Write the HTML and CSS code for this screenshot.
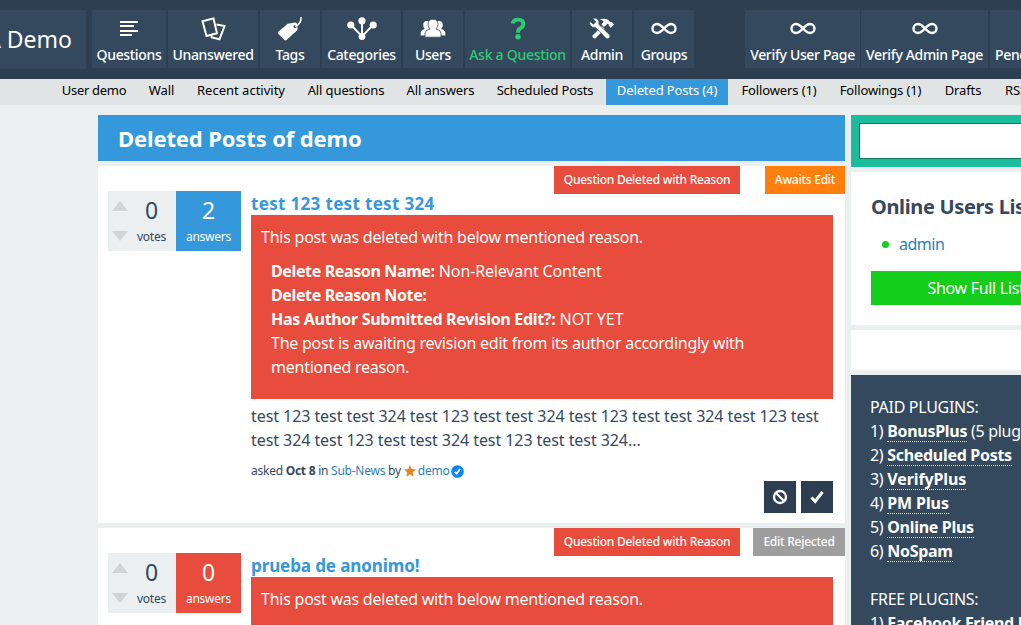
FILE: index.html
```html
<!DOCTYPE html>
<html lang="en">
<head>
<meta charset="utf-8">
<title>Deleted Posts of demo</title>
<link rel="stylesheet" href="styles.css">
</head>
<body>
<header class="topbar">
  <a class="logo"><span class="logo-text">Q2A Demo</span></a>
  <nav class="nav-main">
    <a class="tile t-questions"><svg class="icon" viewBox="0 0 30 30"><path d="M6 9h18M6 13h14M6 18h18M6 22h12" stroke="#fff" stroke-width="2"/></svg><span>Questions</span></a>
    <a class="tile t-unanswered"><svg class="icon" viewBox="0 0 30 30"><g fill="none" stroke="#fff" stroke-width="2"><path d="M4.500 8.200 15.500 5.400 19 20.300 8.500 23Z"/><path d="M18.500 11.500 26.500 13 21.500 26.300 13.800 24.500 13.200 22"/></g></svg><span>Unanswered</span></a>
    <a class="tile t-tags"><svg class="icon" viewBox="0 0 30 30"><path fill="#fff" fill-rule="evenodd" d="M3 19 12.700 10.700 20 9.500Q22 9.500 22.400 11.500L22.500 17 11.500 27Q10 28 9 26.500L3 20.500Q2.500 19.800 3 19ZM20 12a1.600 1.600 0 1 0 .1 0Z"/><path d="M20 13.500C24 12 26.300 9 26 4" fill="none" stroke="#fff" stroke-width="1.500"/></svg><span>Tags</span></a>
    <a class="tile t-categories"><svg class="icon" viewBox="0 0 30 30"><path d="M4 12 15 23.500 26 12M15 8v16" fill="none" stroke="#fff" stroke-width="1.900"/><g fill="#fff"><circle cx="3.800" cy="12" r="3.600"/><circle cx="15" cy="7.800" r="3.600"/><circle cx="26.200" cy="12" r="3.600"/><circle cx="15" cy="23.500" r="3.400"/></g></svg><span>Categories</span></a>
    <a class="tile t-users"><svg class="icon" viewBox="0 0 30 30"><g fill="#fff"><path d="M2.700 22.500v-3q0-2 4-3.500-1.500-1.500-1.500-4Q5.200 8 9 8q4 0 4 4.500 0 4-2 5l3 5Z"/><path d="M27.300 22.500v-3q0-2-4-3.500 1.500-1.500 1.500-4 0-4-3.800-4-4 0-4 4.500 0 4 2 5l-3 5Z"/><path stroke="#34495e" stroke-width=".8" d="M7 24.200v-4q0-3 5-4.200-2-2-2-4.500Q10 6.300 15 6.300t5 5.200q0 2.500-2 4.500 5 1.200 5 4.200v4Z"/></g></svg><span>Users</span></a>
    <a class="tile t-ask"><svg class="icon" viewBox="0 0 30 30"><path d="M9.800 10.500Q10.200 6.600 15 6.600q5.300 0 5.300 4.300 0 2.800-3 4.300-2.300 1.300-2.300 4.600" fill="none" stroke="#2ecc71" stroke-width="3.900"/><circle cx="15" cy="23.800" r="2.700" fill="#2ecc71"/></svg><span>Ask a Question</span></a>
    <a class="tile t-admin"><svg class="icon" viewBox="0 0 30 30"><path fill="#fff" d="m5.500 22.500 9.500-9.200 2.700 2.800-9.500 9.400q-3.400-.3-2.700-3Z"/><path fill="#fff" d="m12.500 6.300q5.500-1.500 8.500.5l2.500 2.500 1.300-.2 2.200 2.400-3.200 3.200-2.200-2.200.1-1.300-1.200-.5-3.500 3.300-2.700-2.700 2.500-2.500q-1-1.700-4.300-2.500Z"/><path stroke="#34495e" stroke-width=".7" fill="#fff" d="M5.800 5.300q3-1 5.300 1.500 1.500 2 .7 4.500l10.700 10.500q1.300 2.300-.8 3.700-1.500.8-3-.5L8.300 14.300Q5.500 15 3.600 12.800 2 10.800 2.800 8.200l3.500 3 2.500-2.300Z"/></svg><span>Admin</span></a>
    <a class="tile t-groups"><svg class="icon" viewBox="0 0 30 30"><path class="infinity" d="M15 15.500C12 12.200 10.500 11 8 11a4.500 4.500 0 0 0 0 9C10.500 20 12 18.800 15 15.500S19.500 11 22 11a4.500 4.500 0 0 1 0 9C19.500 20 18 18.800 15 15.500Z"/></svg><span>Groups</span></a>
    <a class="tile t-vuser"><svg class="icon" viewBox="0 0 30 30"><path class="infinity" d="M15 15.500C12 12.200 10.500 11 8 11a4.500 4.500 0 0 0 0 9C10.500 20 12 18.800 15 15.500S19.500 11 22 11a4.500 4.500 0 0 1 0 9C19.500 20 18 18.800 15 15.500Z"/></svg><span>Verify User Page</span></a>
    <a class="tile t-vadmin"><svg class="icon" viewBox="0 0 30 30"><path class="infinity" d="M15 15.500C12 12.200 10.500 11 8 11a4.500 4.500 0 0 0 0 9C10.500 20 12 18.800 15 15.500S19.500 11 22 11a4.500 4.500 0 0 1 0 9C19.500 20 18 18.800 15 15.500Z"/></svg><span>Verify Admin Page</span></a>
    <a class="tile t-pending"><i class="icon"></i><span>Pending</span></a>
  </nav>
</header>
<nav class="nav-sub">
  <a class="s1">User demo</a><a class="s2">Wall</a><a class="s3">Recent activity</a><a class="s4">All questions</a><a class="s5">All answers</a><a class="s6">Scheduled Posts</a><a class="s7 active">Deleted Posts (4)</a><a class="s8">Followers (1)</a><a class="s9">Followings (1)</a><a class="s10">Drafts</a><a class="s11">RSS</a>
</nav>
<div class="page">
  <main class="main">
    <h1><span>Deleted Posts of demo</span></h1>
    <article class="post post-full">
      <div class="labels"><span class="label red">Question Deleted with Reason</span><span class="label orange">Awaits Edit</span></div>
      <div class="post-row">
        <div class="stats">
          <div class="votes"><div class="arrows"><i class="up"></i><i class="down"></i></div><div class="count"><b>0</b><small>votes</small></div></div>
          <div class="answers"><b>2</b><small>answers</small></div>
        </div>
        <div class="content">
          <h2><span class="title-a">test 123 test test 324</span></h2>
          <div class="notice">
            <p><span class="n1">This post was deleted with below mentioned reason.</span></p>
            <div class="details">
              <div><b class="n2">Delete Reason Name:</b> <span class="n3">Non-Relevant Content</span></div>
              <div><b class="n2">Delete Reason Note:</b></div>
              <div><b class="n4">Has Author Submitted Revision Edit?:</b> <span class="n5">NOT YET</span></div>
              <div class="n6">The post is awaiting revision edit from its author accordingly with<br>mentioned reason.</div>
            </div>
          </div>
          <div class="excerpt">test 123 test test 324 test 123 test test 324 test 123 test test 324 test 123 test<br>test 324 test 123 test test 324 test 123 test test 324...</div>
          <div class="meta"><span>asked <b>Oct 8</b> in <a>Sub-News</a> by</span><svg class="star" viewBox="0 0 12 12"><path fill="#e67e22" d="m6 0 1.600 4.100 4.400.3-3.400 2.800 1.100 4.500L6 9.200l-3.700 2.500 1.100-4.500L0 4.400l4.400-.3Z"/></svg><a>demo</a><svg class="verified" viewBox="0 0 13 13"><circle cx="6.500" cy="6.500" r="6.300" fill="#0a84ff"/><path d="m3.800 6.800 1.800 1.900 3.500-4.900" fill="none" stroke="#fff" stroke-width="1.800"/></svg></div>
          <div class="actions">
            <button><svg viewBox="0 0 32 32"><g fill="none" stroke="#fff" stroke-width="2.300"><circle cx="16" cy="16" r="6"/><path d="m12 12 8 8"/></g></svg></button>
            <button><svg viewBox="0 0 32 32"><path d="m10.500 16.500 3.700 4L21.500 11" fill="none" stroke="#fff" stroke-width="3"/></svg></button>
          </div>
        </div>
      </div>
    </article>
    <article class="post">
      <div class="labels"><span class="label red">Question Deleted with Reason</span><span class="label gray">Edit Rejected</span></div>
      <div class="post-row">
        <div class="stats">
          <div class="votes"><div class="arrows"><i class="up"></i><i class="down"></i></div><div class="count"><b>0</b><small>votes</small></div></div>
          <div class="answers none"><b>0</b><small>answers</small></div>
        </div>
        <div class="content">
          <h2><span class="title-b">prueba de anonimo!</span></h2>
          <div class="notice"><p><span class="n1">This post was deleted with below mentioned reason.</span></p></div>
        </div>
      </div>
    </article>
  </main>
  <aside class="side">
    <div class="search"><div class="search-input"></div></div>
    <section class="online">
      <h3>Online Users List</h3>
      <ul><li><a>admin</a></li></ul>
      <a class="full-list">Show Full List</a>
    </section>
    <section class="blank"></section>
    <section class="plugins">
      <div>PAID PLUGINS:</div>
      <div>1) <a>BonusPlus</a> (5 plugins)</div>
      <div>2) <a>Scheduled Posts</a></div>
      <div>3) <a class="wide">VerifyPlus</a></div>
      <div>4) <a class="wide">PM Plus</a></div>
      <div>5) <a>Online Plus</a></div>
      <div>6) <a>NoSpam</a></div>
      <div class="gap">FREE PLUGINS:</div>
      <div>1) <a>Facebook Friend List</a></div>
    </section>
  </aside>
</div>
</body>
</html>
```
FILE: styles.css
```css
* { box-sizing: border-box; }
html, body { height: 625px; overflow: hidden; }
body { margin: 0; background: #ebeff0; color: #34495e; font: 16px/24px "Noto Sans", "Open Sans", sans-serif; white-space: nowrap; }
h1, h2, h3, p, ul { margin: 0; padding: 0; }
svg { display: block; }

.topbar { height: 79px; padding-top: 10px; background: #2c3e50; display: flex; align-items: flex-start; overflow: hidden; }
.logo { flex: none; width: 86px; height: 59px; margin-right: 6px; padding-right: 14px; background: #34495e; color: #fff; font-size: 23px; line-height: 58px; display: flex; justify-content: flex-end; overflow: hidden; }
.nav-main { display: flex; gap: 2px; }
.tile { flex: none; height: 58px; background: #34495e; color: #fff; font-size: 14px; line-height: 20px; font-weight: 500; letter-spacing: -.34px; display: flex; flex-direction: column; align-items: center; }
.icon { width: 30px; height: 30px; margin: 3px 0 2px; }
.infinity { fill: none; stroke: #fff; stroke-width: 2.4; }
.t-questions { width: 74px; }
.t-unanswered { width: 90px; }
.t-tags { width: 60px; }
.t-categories { width: 79px; }
.t-users { width: 60px; }
.t-ask { width: 105px; color: #2ecc71; letter-spacing: -.25px; }
.t-admin, .t-groups { width: 60px; }
.t-vuser { width: 115px; margin-left: 49px; }
.t-vadmin { width: 127px; margin-left: -1px; }
.t-pending { width: 80px; padding-left: 5px; align-items: flex-start; }

.nav-sub { height: 26px; padding-left: 52px; background: #e0e4e4; color: #000; font-size: 13px; line-height: 23px; letter-spacing: -.12px; display: flex; overflow: hidden; }
.nav-sub a { flex: none; text-align: center; }
.s1 { width: 84px; letter-spacing: -.3px; }
.s2 { width: 51px; }
.s3 { width: 108px; letter-spacing: 0; }
.s4 { width: 102px; }
.s5 { width: 87px; }
.s6 { width: 122px; }
.s6 { letter-spacing: -.2px; }
.s7 { width: 122px; }
.s8 { width: 102px; }
.s9 { width: 101px; }
.s10 { width: 64px; }
.s11 { width: 42px; }
.nav-sub .active { background: #3498db; color: #fff; }

.page { display: flex; gap: 6px; padding: 10px 0 0 98px; }
.main { flex: none; width: 747px; }
h1 { height: 46px; padding-left: 20px; background: #3498db; color: #fff; font-size: 22px; line-height: 46px; letter-spacing: -.13px; }
.post { height: 357px; margin-top: 5px; background: #fff; }
.labels { height: 25px; display: flex; justify-content: flex-end; align-items: flex-start; position: relative; }
.label { height: 28px; color: #fff; font-size: 12px; line-height: 28px; font-weight: 500; letter-spacing: -.25px; text-align: center; }
.red { width: 186px; background: #e74c3c; }
.orange { width: 80px; margin-left: 25px; background: #ff7f0e; }
.gray { width: 92px; margin-left: 13px; background: #9e9e9e; }
.post-row { display: flex; gap: 10px; padding-left: 10px; }
.stats { flex: none; display: flex; height: 60px; }
.votes { width: 68px; background: #ebeff0; display: flex; color: #34495e; }
.arrows { width: 24px; padding: 10px 0 0 4px; display: flex; flex-direction: column; gap: 20px; }
.up, .down { width: 16px; border: solid transparent; border-width: 0 8px 10px; border-bottom-color: #d2d5d6; }
.down { border-width: 10px 8px 0; border-top-color: #d2d5d6; }
.count, .answers { display: flex; flex-direction: column; align-items: center; }
.count { width: 39px; }
.answers { width: 65px; background: #3498db; color: #fff; }
.none { background: #e74c3c; }
.stats b { font-size: 23px; line-height: 39px; height: 36px; font-weight: 400; }
.stats small { font-size: 12px; line-height: 20px; letter-spacing: -.25px; }
.content { width: 582px; }
h2 { height: 24px; color: #3498db; font-size: 17px; line-height: 25px; }
.title-a { letter-spacing: .33px; }
.title-b { letter-spacing: -.1px; }
.notice { background: #e74c3c; color: #fff; padding: 10px 9px 10px 10px; height: 184px; }
.n1, .n6 { letter-spacing: -.24px; }
.n2 { letter-spacing: -.37px; }
.n3 { letter-spacing: -.15px; }
.n4 { letter-spacing: -.31px; }
.details { padding: 10px; }
.excerpt { margin-top: 5px; letter-spacing: -.07px; }
.meta { height: 24px; margin-top: 7px; display: flex; align-items: center; font-size: 12px; letter-spacing: -.25px; }
.meta a { color: #2980b9; }
.star { width: 12px; height: 12px; margin: 0 2px 0 3px; }
.verified { width: 13px; height: 13px; margin-left: 2px; }
.actions { display: flex; justify-content: flex-end; gap: 5px; margin-top: -2px; }
.actions button { width: 32px; height: 32px; padding: 0; border: 0; background: #2c3e50; }
.side { flex: none; width: 250px; }
.search { height: 52px; padding: 8px; background: #1abc9c; }
.search-input { height: 36px; background: #fff; border: 1px solid #117964; }
.online { height: 153px; margin-top: 5px; padding: 20px; background: #fff; }
h3 { font-size: 20px; line-height: 30px; letter-spacing: -.35px; }
ul { list-style: none; }
li { display: flex; align-items: center; padding-left: 11px; line-height: 44px; height: 44px; color: #2980b9; letter-spacing: -.5px; }
li::before { content: ""; width: 7px; height: 7px; border-radius: 50%; background: #15cd1b; margin-right: 10px; }
.full-list { display: block; height: 34px; margin-top: 5px; line-height: 34px; background: #15cd1b; color: #fff; text-align: center; letter-spacing: -.3px; }
.blank { height: 40px; margin-top: 5px; background: #fff; }
.plugins { height: 300px; margin-top: 5px; padding: 20px 19px; background: #34495e; color: #fff; letter-spacing: -.3px; }
.plugins a { display: inline-block; line-height: 19px; font-weight: 700; border-bottom: 1px dotted #fff; }
.plugins .wide { letter-spacing: -.1px; }
.gap { margin-top: 24px; }
```
